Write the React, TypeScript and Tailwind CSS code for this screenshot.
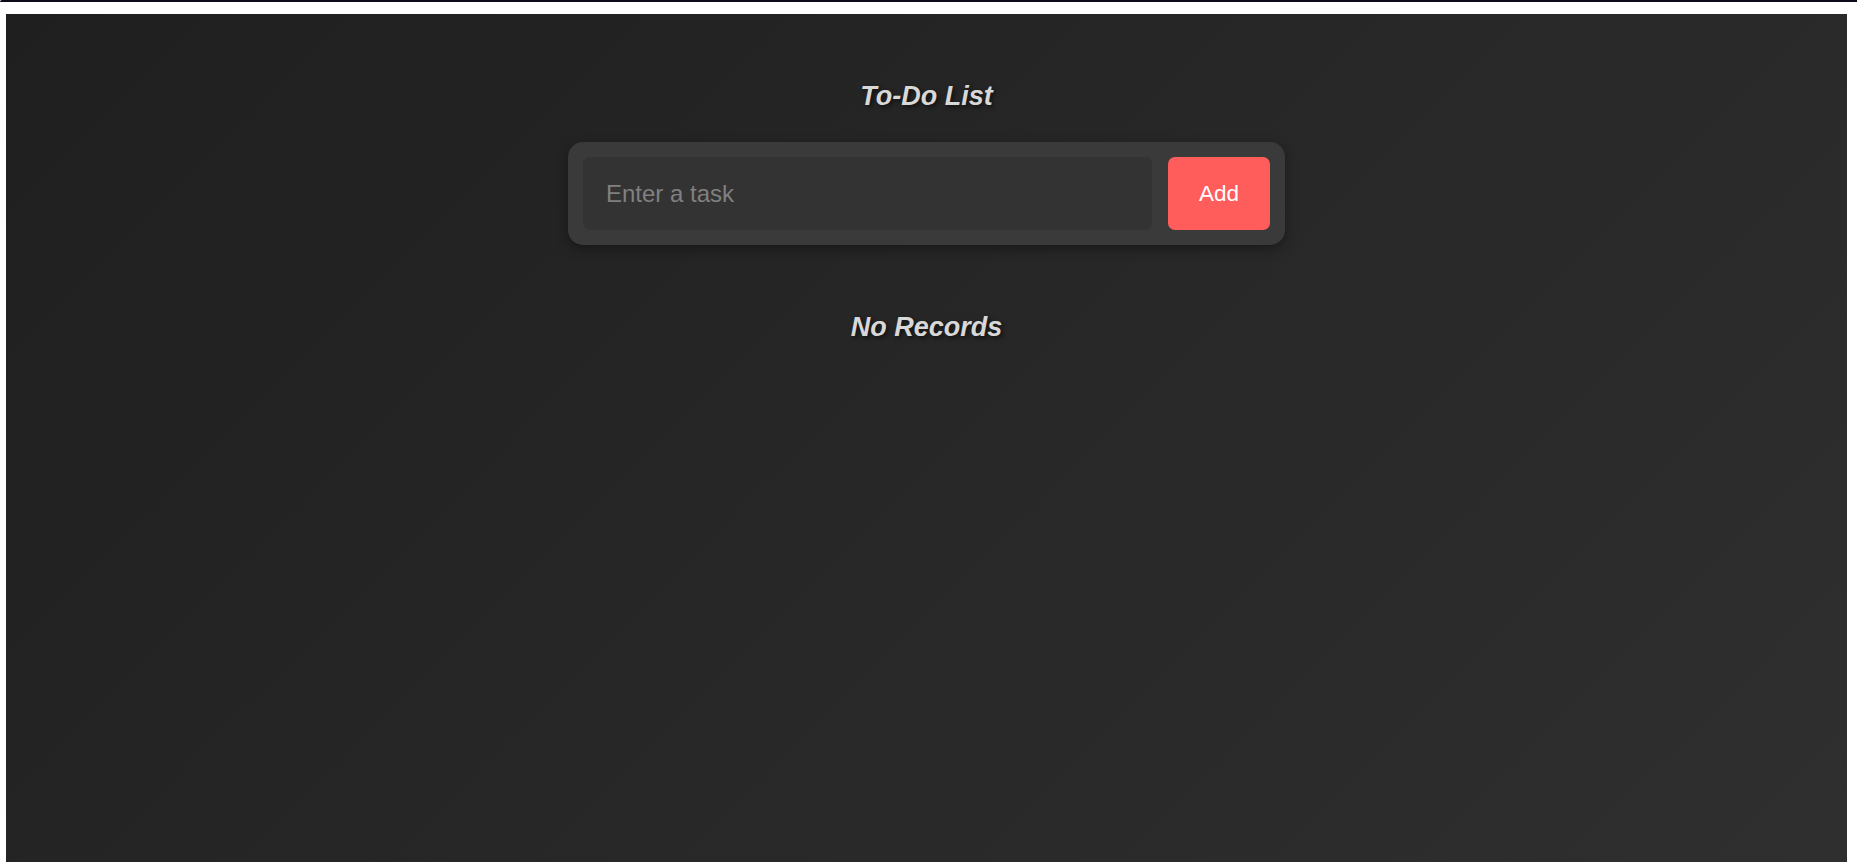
import React from "react";

export default function App() {
  return (
    <div className="min-h-[862px] h-[862px] overflow-hidden bg-white flex flex-col" style={{ fontFamily: '"Liberation Sans", Arial, sans-serif' }}>
      <div className="h-[2px] bg-[#0b0b1c] rounded-tl-[10px] shrink-0" />
      <div className="flex-1 flex flex-col pt-[12px] pl-[6px] pr-[10px]">
        <div className="flex-1 flex flex-col items-center bg-[linear-gradient(135deg,#1f1f1f_0%,#2f2f2f_100%)]">
          <h1 className="mt-[67px] text-[27px] leading-[30px] font-bold italic text-[#d8d8d8] [text-shadow:2px_2px_4px_rgba(0,0,0,0.6)]">
            To-Do List
          </h1>
          <div className="mt-[31px] w-[717px] h-[103px] p-[15px] bg-[#3a3a3a] rounded-[15px] flex gap-[16px] shadow-[0_4px_12px_rgba(0,0,0,0.35)]">
            <input
              type="text"
              placeholder="Enter a task"
              className="flex-1 min-w-0 h-[73px] bg-[#333333] rounded-[7px] px-[23px] text-[24px] text-white placeholder:text-[#808080] outline-none border-0"
            />
            <button className="w-[102px] h-[73px] bg-[#ff5c5c] rounded-[7px] text-white text-[22.5px]">
              Add
            </button>
          </div>
          <h2 className="mt-[67px] text-[27px] leading-[30px] font-bold italic text-[#d8d8d8] [text-shadow:2px_2px_4px_rgba(0,0,0,0.6)]">
            No Records
          </h2>
        </div>
      </div>
    </div>
  );
}
